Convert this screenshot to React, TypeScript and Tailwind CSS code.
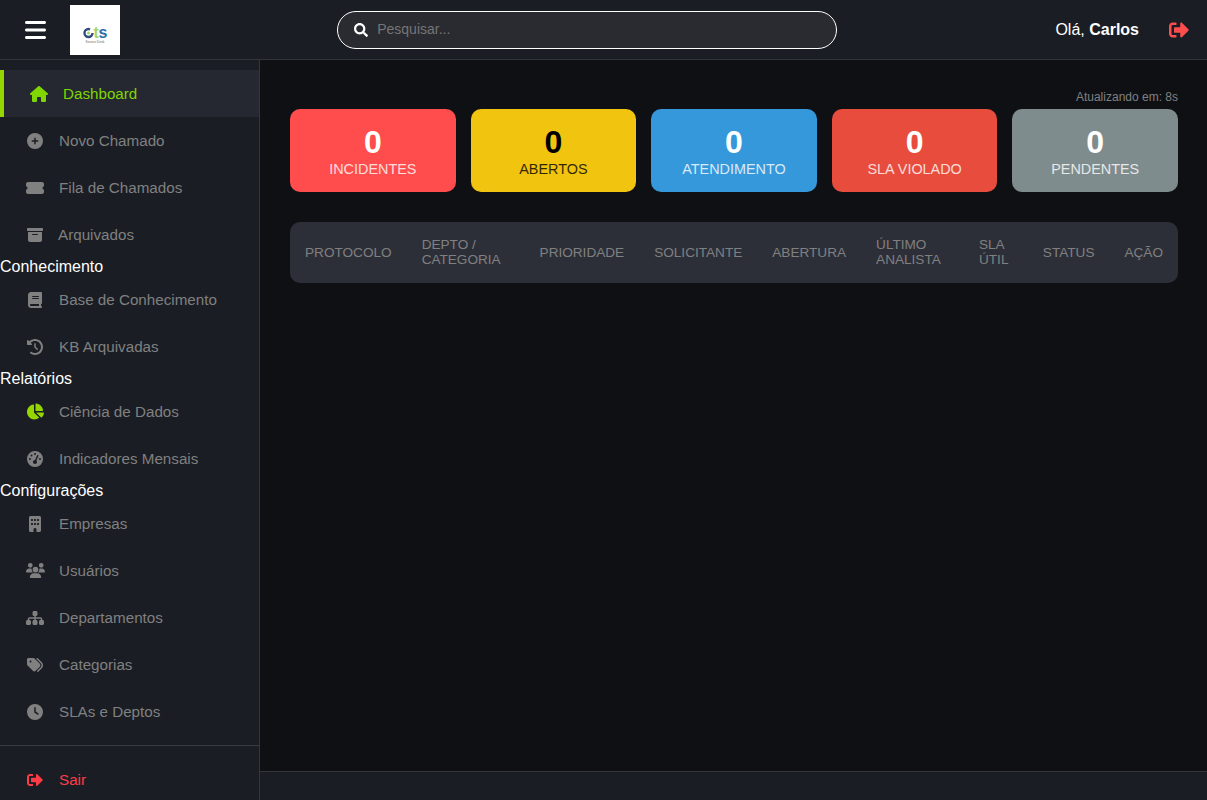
import React from "react";
import { FaSearch, FaSignOutAlt, FaChartPie } from "react-icons/fa";
import {
  FaBars, FaHouse, FaCirclePlus, FaTicketSimple, FaBoxArchive, FaBook, FaClockRotateLeft,
  FaGaugeHigh, FaBuilding, FaUsers, FaSitemap, FaTags, FaClock,
} from "react-icons/fa6";

type ItemProps = { icon: React.ComponentType<{ className?: string }>; label: string; active?: boolean; iconClass?: string; labelClass?: string };

function Item({ icon: Icon, label, active, iconClass, labelClass }: ItemProps) {
  return (
    <a
      className={
        active
          ? "flex items-center h-[47px] shrink-0 pl-[25px] border-l-4 border-[#96d600] bg-[#252830] text-[#7fd600]"
          : "flex items-center h-[47px] shrink-0 pl-[25px] text-[#808080]"
      }
    >
      <span className="w-5 flex justify-center">
        <Icon className={iconClass ?? "text-[16px] text-[#808080]"} />
      </span>
      <span className={labelClass ?? "ml-[14px] text-[15.2px] leading-[17px]"}>{label}</span>
    </a>
  );
}

function Section({ children }: { children: React.ReactNode }) {
  return <div className="text-[16px] leading-[18px] text-white shrink-0">{children}</div>;
}

function Card({ value, label, bg, dark }: { value: number; label: string; bg: string; dark?: boolean }) {
  return (
    <div className={`flex-1 h-[83px] rounded-[10px] flex flex-col items-center justify-center ${bg} ${dark ? "text-black" : "text-white"}`}>
      <div className="text-[32px] leading-[38px] font-bold">{value}</div>
      <div className="text-[14.4px] leading-[17px] opacity-80">{label}</div>
    </div>
  );
}

const columns = ["PROTOCOLO", "DEPTO / CATEGORIA", "PRIORIDADE", "SOLICITANTE", "ABERTURA", "ÚLTIMO ANALISTA", "SLA ÚTIL", "STATUS", "AÇÃO"];

export default function App() {
  return (
    <div className="h-[800px] w-[1207px] overflow-hidden flex flex-col bg-[#0f1014] font-['Liberation_Sans',Arial,sans-serif]">
      <header className="h-[60px] shrink-0 bg-[#1a1d24] border-b border-[#33353a] flex items-center justify-between pl-[25px] pr-[18px]">
        <div className="flex items-center">
          <FaBars className="text-white text-[24px] w-[21px]" />
          <div className="ml-[24px] w-[50px] h-[50px] bg-white">
            <svg viewBox="0 0 50 50" className="w-[50px] h-[50px]" fontFamily="'Liberation Sans', Arial, sans-serif">
              <circle cx="18.5" cy="28" r="4" fill="none" stroke="#2f4f7f" strokeWidth="2.4" strokeDasharray="20 5" />
              <circle cx="18.5" cy="28" r="1.5" fill="#a5d66a" />
              <text x="23.5" y="33" fontSize="16" fontWeight="700" fill="#a5d66a">t</text>
              <text x="28.5" y="33" fontSize="16" fontWeight="700" fill="#2f6fa8">s</text>
              <text x="25" y="37.5" fontSize="3.2" textAnchor="middle" fill="#666">Service Desk</text>
            </svg>
          </div>
        </div>
        <div className="w-[500px] h-[38px] -ml-[1px] rounded-full border border-white bg-[#2a2b30] flex items-center pl-4">
          <FaSearch className="text-white text-[14px]" />
          <input placeholder="Pesquisar..." className="ml-[9px] flex-1 bg-transparent outline-none text-[14px] text-white placeholder:text-[#757575]" />
        </div>
        <div className="flex items-center">
          <span className="text-white text-[16px]">Olá, <b>Carlos</b></span>
          <FaSignOutAlt className="ml-[30px] text-[20px] text-[#ff4d4d]" />
        </div>
      </header>
      <div className="flex flex-1 min-h-0">
        <aside className="w-[260px] shrink-0 bg-[#1a1d24] border-r border-[#33353a] flex flex-col overflow-hidden pt-[10px]">
          <Item icon={FaHouse} label="Dashboard" active iconClass="text-[18px] text-[#7fd600]" />
          <Item icon={FaCirclePlus} label="Novo Chamado" />
          <Item icon={FaTicketSimple} label="Fila de Chamados" iconClass="text-[18px] text-[#808080]" />
          <Item icon={FaBoxArchive} label="Arquivados" labelClass="ml-[13px] text-[15.2px] leading-[17px]" />
          <Section>Conhecimento</Section>
          <Item icon={FaBook} label="Base de Conhecimento" />
          <Item icon={FaClockRotateLeft} label="KB Arquivadas" />
          <Section>Relatórios</Section>
          <Item icon={FaChartPie} label="Ciência de Dados" iconClass="text-[17px] text-[#96d600]" />
          <Item icon={FaGaugeHigh} label="Indicadores Mensais" />
          <Section>Configurações</Section>
          <Item icon={FaBuilding} label="Empresas" />
          <Item icon={FaUsers} label="Usuários" iconClass="text-[19px] text-[#808080]" />
          <Item icon={FaSitemap} label="Departamentos" iconClass="text-[18px] text-[#808080]" />
          <Item icon={FaTags} label="Categorias" />
          <Item icon={FaClock} label="SLAs e Deptos" />
          <div className="mt-[10px] border-t border-[#3a3c42] pt-[10px] shrink-0">
            <a className="flex items-center h-[47px] pl-[25px]">
              <span className="w-5 flex justify-center"><FaSignOutAlt className="text-[16px] text-[#ff3b47]" /></span>
              <span className="ml-[14px] text-[15.2px] leading-[17px] text-[#ff3b47]">Sair</span>
            </a>
          </div>
        </aside>
        <div className="flex-1 min-w-0 flex flex-col">
          <main className="flex-1 min-h-0 pt-[30px] pl-[30px] pr-[29px]">
            <div className="text-right text-[12px] leading-[14px] text-[#808080] mb-[5px]">Atualizando em: 8s</div>
            <div className="flex gap-[15px]">
              <Card value={0} label="INCIDENTES" bg="bg-[#ff4d4d]" />
              <Card value={0} label="ABERTOS" bg="bg-[#f1c40f]" dark />
              <Card value={0} label="ATENDIMENTO" bg="bg-[#3498db]" />
              <Card value={0} label="SLA VIOLADO" bg="bg-[#e74c3c]" />
              <Card value={0} label="PENDENTES" bg="bg-[#7f8c8d]" />
            </div>
            <div className="mt-[30px] rounded-[10px] bg-[#2d2f38] overflow-hidden">
              <table className="w-full border-collapse">
                <thead>
                  <tr>
                    {columns.map((c) => (
                      <th key={c} className="h-[61px] px-[15px] pt-0 pb-[1px] text-left font-normal text-[13.6px] leading-[15px] text-[#808080]">{c}</th>
                    ))}
                  </tr>
                </thead>
              </table>
            </div>
          </main>
          <footer className="h-[29px] shrink-0 bg-[#1a1d24] border-t border-[#33353a]" />
        </div>
      </div>
    </div>
  );
}
